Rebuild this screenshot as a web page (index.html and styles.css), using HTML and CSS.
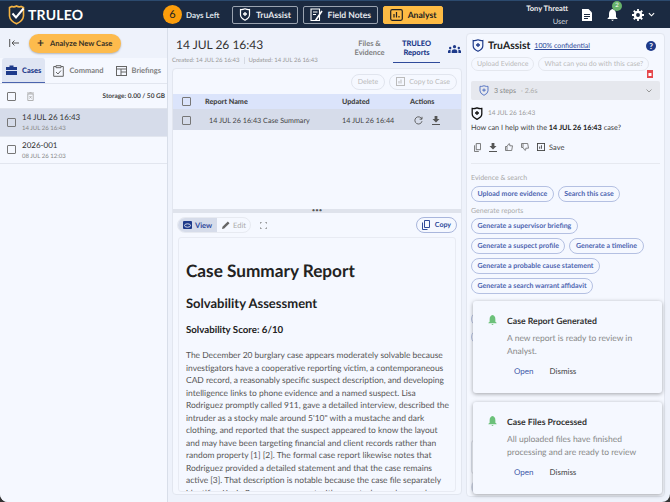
FILE: index.html
```html
<!DOCTYPE html>
<html lang="en">
<head>
  <meta charset="UTF-8" />
  <meta name="viewport" content="width=device-width, initial-scale=1.0" />
  <title>TRULEO Analyst</title>
  <link rel="stylesheet" href="styles.css">
</head>
<body>
  <div class="app">
    <!-- Top bar -->
    <header class="topbar">
      <div class="logo">
        <svg width="17" height="20" viewBox="0 0 17 20"><path d="M1.5 2.5 L4 1.5 Q6 2.5 8.5 1 Q11 2.5 13 1.5 L15.5 2.5 V11 Q15 16 8.5 18.8 Q2 16 1.5 11 Z" fill="none" stroke="#f5b342" stroke-width="1.6"/><path d="M4.5 8.5 L8 12.5 L15.5 3.5" fill="none" stroke="#fff" stroke-width="2"/></svg>
        <span>TRULEO</span>
      </div>
      <div class="days"><span class="days-num">6</span><span class="days-label">Days Left</span></div>
      <a class="nav-btn">
        <svg width="12" height="13" viewBox="0 0 12 13"><path d="M1.5 1.5 Q3 2 6 .8 Q9 2 10.5 1.5 V7 Q10.5 10 6 12.2 Q1.5 10 1.5 7 Z" fill="none" stroke="#fff" stroke-width="1.2"/><path d="M6 4 V8 M4 6 H8" stroke="#fff" stroke-width="1.3"/></svg>
        TruAssist
      </a>
      <a class="nav-btn">
        <svg width="13" height="14" viewBox="0 0 13 14"><path d="M1 1 H9.5 V12.5 H1 Z" fill="none" stroke="#fff" stroke-width="1.1"/><path d="M3 4 H7.5 M3 6.5 H6" stroke="#fff"/><path d="M12 3 L6.5 11 L5.5 12.5" stroke="#fff" stroke-width="1.6" fill="none"/></svg>
        Field Notes
      </a>
      <a class="nav-btn nav-active">
        <svg width="13" height="12" viewBox="0 0 13 12"><rect x=".7" y=".7" width="11.6" height="10.6" rx="1.5" fill="none" stroke="#222" stroke-width="1.2"/><path d="M4 8.5 V5 M6.5 8.5 V3 M9 8.5 V7" stroke="#222" stroke-width="1.2"/></svg>
        Analyst
      </a>
      <div class="user"><b>Tony Threatt</b><span>User</span></div>
      <svg class="top-icon" width="10" height="12" viewBox="0 0 10 12"><path d="M0 0 H6.5 L10 3.5 V12 H0 Z" fill="#fff"/><path d="M2 5.5 H8 M2 7.5 H8 M2 9.5 H6" stroke="#1b2a41"/></svg>
      <div class="bell">
        <svg width="11" height="12" viewBox="0 0 11 12"><path d="M5.5 0 Q9 1 9 5 V8 L10.5 9.5 V10 H.5 V9.5 L2 8 V5 Q2 1 5.5 0 Z M4 10.8 H7 L5.5 12 Z" fill="#fff"/></svg>
        <span class="badge">2</span>
      </div>
      <svg class="gear" width="12" height="12" viewBox="0 0 13 13"><circle cx="6.5" cy="6.5" r="3.4" fill="none" stroke="#fff" stroke-width="2.6"/><path d="M6.5 0 V3 M6.5 10 V13 M0 6.5 H3 M10 6.5 H13 M1.9 1.9 L4 4 M9 9 L11.1 11.1 M1.9 11.1 L4 9 M9 4 L11.1 1.9" stroke="#fff" stroke-width="2"/></svg>
      <svg width="7" height="5" viewBox="0 0 8 5"><path d="M1 1 L4 4 L7 1" fill="none" stroke="#fff" stroke-width="1.3"/></svg>
    </header>

    <div class="columns">
      <!-- Case list -->
      <aside class="sidebar">
        <div class="side-top">
          <svg width="10" height="8" viewBox="0 0 10 8"><path d="M.7 0 V8 M10 4 H3 M5.5 1.5 L3 4 L5.5 6.5" fill="none" stroke="#555" stroke-width="1"/></svg>
          <button class="analyze"><span class="plus">+</span>Analyze New Case</button>
        </div>
        <nav class="side-tabs">
          <a class="side-tab side-tab-on">
            <svg width="11" height="10" viewBox="0 0 11 10"><path d="M3.5 2 V.5 H7.5 V2 H11 V5 H0 V2 Z M0 6 H11 V10 H0 Z" fill="#1e3a8a"/></svg>
            Cases
          </a>
          <a class="side-tab">
            <svg width="11" height="12" viewBox="0 0 11 12"><path d="M3 1.5 H.7 V11.3 H10.3 V1.5 H8 M3 .7 H8 V2.7 H3 Z" fill="none" stroke="#666"/><path d="M3 7 L5 9 L8 5.5" fill="none" stroke="#666"/></svg>
            Command
          </a>
          <a class="side-tab">
            <svg width="11" height="10" viewBox="0 0 11 10"><rect x=".5" y=".5" width="10" height="9" fill="none" stroke="#666"/><path d="M.5 3 H10.5 M5 3 V9.5 M5 6 H10.5" stroke="#666"/></svg>
            Briefings
          </a>
        </nav>
        <div class="storage-row">
          <span class="check"></span>
          <svg width="7" height="9" viewBox="0 0 7 9"><path d="M.8 2 H6.2 V8.5 H.8 Z M0 1 H7 M2.5 .3 H4.5 M2.5 4 L4.5 6.5 M4.5 4 L2.5 6.5" fill="none" stroke="#aaa" stroke-width=".9"/></svg>
          <span class="storage">Storage: 0.00 / 50 GB</span>
        </div>
        <div class="case-row case-row-on">
          <span class="check"></span>
          <div><div class="case-name">14 JUL 26 16:43</div><div class="case-date">14 JUL 26 16:43</div></div>
        </div>
        <div class="case-row">
          <span class="check"></span>
          <div><div class="case-name">2026-001</div><div class="case-date">08 JUL 26 12:03</div></div>
        </div>
      </aside>

      <!-- Case detail -->
      <main class="main">
        <div class="main-head">
          <div class="main-title">
            <h1>14 JUL 26 16:43</h1>
            <div class="meta"><span>Created: 14 JUL 26 16:43</span><span class="meta-sep">Updated: 14 JUL 26 16:43</span></div>
          </div>
          <a class="main-tab">Files &amp;<br>Evidence</a>
          <a class="main-tab main-tab-on">TRULEO<br>Reports</a>
          <svg class="people" width="13" height="8" viewBox="0 0 13 8"><circle cx="6.5" cy="1.7" r="1.6" fill="#1e3a8a"/><circle cx="2.2" cy="3" r="1.2" fill="#1e3a8a"/><circle cx="10.8" cy="3" r="1.2" fill="#1e3a8a"/><path d="M3.7 8 V6 Q4 4.2 6.5 4.2 Q9 4.2 9.3 6 V8 Z M0 8 V6 Q.3 4.8 2.6 4.8 V8 Z M13 8 V6 Q12.7 4.8 10.4 4.8 V8 Z" fill="#1e3a8a"/></svg>
        </div>
        <section class="card">
          <div class="reports">
            <div class="report-tools">
              <button class="ghost">Delete</button>
              <button class="ghost">
                <svg width="9" height="9" viewBox="0 0 9 9"><rect x=".5" y=".5" width="8" height="8" fill="none" stroke="#bbb"/><path d="M3 6.5 V4 M5 6.5 V2.5" stroke="#bbb"/></svg>
                Copy to Case
              </button>
            </div>
            <div class="table-row table-head">
              <span class="cell-check"><span class="check"></span></span>
              <span class="cell-name">Report Name</span>
              <span class="cell-date">Updated</span>
              <span class="cell-actions">Actions</span>
            </div>
            <div class="table-row table-sel">
              <span class="cell-check"><span class="check"></span></span>
              <span class="cell-name cell-indent">14 JUL 26 16:43 Case Summary</span>
              <span class="cell-date">14 JUL 26 16:44</span>
              <span class="cell-actions icons">
                <svg width="9" height="9" viewBox="0 0 9 9"><path d="M7.8 3 A3.6 3.6 0 1 0 8 5.2 M8 .8 V3.2 H5.6" fill="none" stroke="#555" stroke-width=".9"/></svg>
                <svg width="8" height="9" viewBox="0 0 8 9"><path d="M2.6 0 H5.4 V3 H7.5 L4 6.5 L.5 3 H2.6 Z M0 8 H8 V9 H0 Z" fill="#555"/></svg>
              </span>
            </div>
          </div>
          <div class="splitter">&bull;&bull;&bull;</div>
          <div class="view-tools">
            <div class="toggle">
              <span class="toggle-on">
                <svg width="9" height="8" viewBox="0 0 9 8"><rect width="9" height="8" rx="1" fill="#1e3a8a"/><ellipse cx="4.5" cy="4.5" rx="3" ry="1.7" fill="none" stroke="#fff" stroke-width=".8"/></svg>
                View
              </span>
              <span class="toggle-off">
                <svg width="8" height="8" viewBox="0 0 8 8"><path d="M0 8 L.5 5.8 L5.8 .5 L7.5 2.2 L2.2 7.5 Z" fill="#666"/></svg>
                Edit
              </span>
            </div>
            <svg width="7" height="7" viewBox="0 0 7 7"><path d="M0 2 V0 H2 M5 0 H7 V2 M7 5 V7 H5 M2 7 H0 V5" fill="none" stroke="#777" stroke-width=".9"/></svg>
            <button class="copy">
              <svg width="8" height="10" viewBox="0 0 8 10"><path d="M2.5 .5 H7.5 V7.5 H2.5 Z M.5 2.5 V9.5 H5.5" fill="none" stroke="#2f4a9a"/></svg>
              Copy
            </button>
          </div>
          <article class="report">
            <h2>Case Summary Report</h2>
            <h3>Solvability Assessment</h3>
            <h4>Solvability Score: 6/10</h4>
            <p>The December 20 burglary case appears moderately solvable because investigators have a cooperative reporting victim, a contemporaneous CAD record, a reasonably specific suspect description, and developing intelligence links to phone evidence and a named suspect. Lisa Rodriguez promptly called 911, gave a detailed interview, described the intruder as a stocky male around 5'10" with a mustache and dark clothing, and reported that the suspect appeared to know the layout and may have been targeting financial and client records rather than random property [1] [2]. The formal case report likewise notes that Rodriguez provided a detailed statement and that the case remains active [3]. That description is notable because the case file separately identifies Kevin Rowan as a suspect with a mustache, and a search</p>
          </article>
        </section>
      </main>

      <!-- TruAssist panel -->
      <section class="assist">
        <div class="assist-head">
          <svg width="12" height="13" viewBox="0 0 12 13"><path d="M1.2 1.5 Q3 2 6 .8 Q9 2 10.8 1.5 V7 Q10.8 10 6 12.3 Q1.2 10 1.2 7 Z" fill="none" stroke="#1e3a8a" stroke-width="1.2"/><path d="M6 4 V8 M4 6 H8" stroke="#1e3a8a" stroke-width="1.3"/></svg>
          <b>TruAssist</b>
          <a>100% confidential</a>
          <span class="help">?</span>
        </div>
        <div class="assist-body">
          <div class="prompts">
            <span>Upload Evidence</span>
            <span>What can you do with this case?</span>
          </div>
          <div class="trash">
            <svg width="6" height="8" viewBox="0 0 6 8"><path d="M0 0 H6 V8 H0 Z" fill="#e5484d"/><path d="M1.5 3 H4.5 V6 H1.5 Z" fill="#fff"/></svg>
          </div>
          <div class="steps">
            <svg width="10" height="11" viewBox="0 0 12 13"><path d="M1.2 1.5 Q3 2 6 .8 Q9 2 10.8 1.5 V7 Q10.8 10 6 12.3 Q1.2 10 1.2 7 Z" fill="none" stroke="#5b78c4" stroke-width="1.2"/><path d="M6 4 V8 M4 6 H8" stroke="#5b78c4" stroke-width="1.3"/></svg>
            <span>3 steps</span><em>&middot; 2.6s</em>
            <svg class="steps-arrow" width="6" height="4" viewBox="0 0 6 4"><path d="M.5 .5 L3 3 L5.5 .5" fill="none" stroke="#999"/></svg>
          </div>
          <div class="msg-head">
            <svg width="12" height="13" viewBox="0 0 12 13"><path d="M1.2 1.5 Q3 2 6 .8 Q9 2 10.8 1.5 V7 Q10.8 10 6 12.3 Q1.2 10 1.2 7 Z" fill="none" stroke="#111" stroke-width="1.3"/><path d="M6 4 V8 M4 6 H8" stroke="#111" stroke-width="1.3"/></svg>
            <span>14 JUL 26 16:43</span>
          </div>
          <p class="msg">How can I help with the <b>14 JUL 26 16:43</b> case?</p>
          <div class="msg-actions">
            <svg width="7" height="9" viewBox="0 0 8 10"><path d="M2.5 .5 H7.5 V7.5 H2.5 Z M.5 2.5 V9.5 H5.5" fill="none" stroke="#666"/></svg>
            <svg width="8" height="9" viewBox="0 0 8 9"><path d="M2.6 0 H5.4 V3 H7.5 L4 6.5 L.5 3 H2.6 Z M0 8 H8 V9 H0 Z" fill="#555"/></svg>
            <svg width="8" height="8" viewBox="0 0 8 8"><path d="M.5 3.5 H2 V7.5 H.5 Z M2 3.5 L4 .5 Q5 .5 4.8 2.8 H7.5 L6.7 7.5 H2" fill="none" stroke="#666" stroke-width=".8"/></svg>
            <svg width="8" height="8" viewBox="0 0 8 8"><path d="M.5 .5 H2 V4.5 H.5 Z M2 4.5 L4 7.5 Q5 7.5 4.8 5.2 H7.5 L6.7 .5 H2" fill="none" stroke="#666" stroke-width=".8"/></svg>
            <span class="save">
              <svg width="8" height="8" viewBox="0 0 9 9"><rect x=".5" y=".5" width="8" height="8" fill="none" stroke="#444"/><path d="M3 6.5 V4 M5 6.5 V2.5" stroke="#444"/></svg>
              Save
            </span>
          </div>
          <div class="group-label">Evidence &amp; search</div>
          <div class="chips">
            <span>Upload more evidence</span>
            <span>Search this case</span>
          </div>
          <div class="group-label">Generate reports</div>
          <div class="chips">
            <span>Generate a supervisor briefing</span>
            <span>Generate a suspect profile</span>
            <span>Generate a timeline</span>
            <span>Generate a probable cause statement</span>
            <span>Generate a search warrant affidavit</span>
          </div>
          <!-- covered by the toasts, only the left edges show -->
          <div class="under-toasts">
            <i class="stub-pill"></i>
            <i class="stub-pill"></i>
            <i class="stub-input"></i>
            <i class="stub-send"></i>
          </div>
        </div>
      </section>
    </div>

    <!-- Notifications -->
    <div class="toasts">
      <div class="toast">
        <svg width="9" height="10" viewBox="0 0 11 12"><path d="M5.5 0 Q9 1 9 5 V8 L10.5 9.5 V10 H.5 V9.5 L2 8 V5 Q2 1 5.5 0 Z M4 10.8 H7 L5.5 12 Z" fill="#6cc17a"/></svg>
        <div>
          <h5>Case Report Generated</h5>
          <p>A new report is ready to review in Analyst.</p>
          <div class="toast-links"><a class="open">Open</a><a>Dismiss</a></div>
        </div>
      </div>
      <div class="toast">
        <svg width="9" height="10" viewBox="0 0 11 12"><path d="M5.5 0 Q9 1 9 5 V8 L10.5 9.5 V10 H.5 V9.5 L2 8 V5 Q2 1 5.5 0 Z M4 10.8 H7 L5.5 12 Z" fill="#6cc17a"/></svg>
        <div>
          <h5>Case Files Processed</h5>
          <p>All uploaded files have finished processing and are ready to review</p>
          <div class="toast-links"><a class="open">Open</a><a>Dismiss</a></div>
        </div>
      </div>
    </div>
  </div>
</body>
</html>
```

FILE: styles.css
```css
*, *::before, *::after {
  box-sizing: border-box;
}
body {
  margin: 0;
  font-family: Lato, "Open Sans", sans-serif;
  text-rendering: geometricPrecision;
  background-color: #333;
  color: #333;
}
p, h1, h2, h3, h4, h5 {
  margin: 0;
}
button {
  font-family: inherit;
  text-rendering: inherit;
}
svg {
  flex: none;
}
.app {
  position: relative;
  width: 670px;
  height: 502px;
  overflow: hidden;
  display: flex;
  flex-direction: column;
  background-color: #eef2fb;
  border-radius: 0 0 8px 8px;
}

/* top bar */
.topbar {
  height: 28px;
  flex: none;
  background-color: #1b2a41;
  border-top: 1px solid #2c4a6e;
  display: flex;
  align-items: center;
  color: #fff;
  padding: 0 15px 0 8px;
}
.logo {
  display: flex;
  align-items: center;
  gap: 3px;
  width: 155px;
  font-size: 14px;
  font-weight: 700;
  letter-spacing: 0.2px;
}
.days {
  display: flex;
  align-items: center;
  gap: 4px;
  width: 69px;
}
.days-num {
  width: 19px;
  height: 19px;
  border-radius: 50%;
  background-color: #fb9d0b;
  color: #222;
  font-size: 11px;
  text-align: center;
  line-height: 19px;
}
.days-label {
  font-size: 8px;
  font-weight: 700;
  color: #dfe3ea;
}
.nav-btn {
  display: flex;
  align-items: center;
  justify-content: center;
  gap: 5px;
  height: 18px;
  margin-right: 4.5px;
  padding: 0 6px;
  border: 1px solid #9aa3b0;
  border-radius: 2px;
  font-size: 8.6px;
  font-weight: 700;
  color: #e6e8ec;
}
.nav-active {
  background-color: #fdbb44;
  border-color: #fdbb44;
  color: #222;
  margin: 0;
}
.user {
  margin-left: auto;
  margin-right: 14px;
  display: flex;
  flex-direction: column;
  align-items: flex-end;
  gap: 4px;
  font-size: 7.5px;
  color: #cfd4dc;
}
.user b {
  font-weight: 700;
  color: #eee;
}
.top-icon {
  margin-right: 15px;
}
.bell {
  position: relative;
  display: flex;
  margin-right: 14px;
}
.badge {
  position: absolute;
  left: 5px;
  top: -8px;
  width: 10px;
  height: 10px;
  border-radius: 50%;
  background-color: #68b36b;
  font-size: 6px;
  text-align: center;
  line-height: 10px;
}
.gear {
  margin-right: 4px;
}

.columns {
  flex: 1;
  display: flex;
  min-height: 0;
}

/* sidebar */
.sidebar {
  width: 168px;
  flex: none;
  background-color: #f5f8ff;
  border-right: 1px solid #d8dee9;
}
.side-top {
  height: 30px;
  background-color: #eef2fb;
  display: flex;
  align-items: center;
  gap: 10px;
  padding-left: 9px;
}
.analyze {
  display: flex;
  align-items: center;
  height: 19px;
  padding: 0 9px 0 8px;
  border: none;
  border-radius: 10px;
  background-color: #fdbb4d;
  box-shadow: 0 1px 2px rgba(0, 0, 0, 0.25);
  font-size: 7.6px;
  font-weight: 700;
  color: #3a3226;
}
.plus {
  font-size: 12px;
  margin-right: 6px;
  line-height: 10px;
}
.side-tabs {
  height: 26px;
  display: flex;
  align-items: stretch;
  padding-left: 2px;
  border-bottom: 1px solid #e2e6ef;
}
.side-tab {
  display: flex;
  align-items: center;
  gap: 5px;
  padding: 0 4px;
  margin-right: 4px;
  font-size: 7.5px;
  font-weight: 700;
  color: #808080;
}
.side-tab-on {
  background-color: #dfe5f3;
  border-bottom: 1px solid #4a64ae;
  border-radius: 3px 3px 0 0;
  color: #1e3a8a;
  font-weight: 900;
}
.storage-row {
  height: 25px;
  display: flex;
  align-items: center;
  padding: 0 2px 0 7px;
  border-bottom: 1px solid #dfe3ec;
}
.storage-row svg {
  margin-left: 11px;
}
.storage {
  margin-left: auto;
  font-size: 6.5px;
  font-weight: 700;
  color: #444;
}
.check {
  display: block;
  width: 9px;
  height: 9px;
  flex: none;
  border: 1px solid #777;
  border-radius: 1px;
}
.case-row {
  height: 27.5px;
  display: flex;
  align-items: center;
  gap: 6px;
  padding-left: 7px;
  border-bottom: 1px solid #e2e6ef;
}
.case-row-on {
  background-color: #d6dcea;
}
.case-name {
  font-size: 8px;
  color: #333;
  margin-bottom: 3px;
}
.case-date {
  font-size: 6px;
  color: #888;
}

/* main column */
.main {
  width: 298px;
  flex: none;
  display: flex;
  flex-direction: column;
  padding: 0 4px 7px;
}
.main-head {
  height: 40px;
  flex: none;
  display: flex;
}
.main-title {
  flex: 1;
  padding-top: 9px;
}
.main-title h1 {
  font-size: 12px;
  font-weight: 400;
  color: #333;
  margin-left: 4px;
  margin-bottom: 5px;
}
.meta {
  display: flex;
  font-size: 6px;
  color: #999;
}
.meta-sep {
  margin-left: 4px;
  padding-left: 4px;
  border-left: 1px solid #d5d9e2;
}
.main-tab {
  width: 47px;
  height: 35px;
  text-align: center;
  font-size: 7.5px;
  line-height: 9px;
  padding-top: 11px;
  color: #808080;
  font-weight: 700;
}
.main-tab-on {
  color: #1e3a8a;
  font-weight: 900;
  border-bottom: 1px solid #2f4a9a;
}
.people {
  margin: 17px 1px 0 8px;
}
.card {
  flex: 1;
  min-height: 0;
  display: flex;
  flex-direction: column;
  background-color: #f5f8ff;
  border: 1px solid #e2e6ef;
  border-radius: 4px;
}
.reports {
  height: 140px;
  flex: none;
}
.report-tools {
  height: 25px;
  display: flex;
  justify-content: flex-end;
  align-items: center;
  gap: 4px;
  padding-right: 4px;
}
.ghost {
  display: flex;
  align-items: center;
  gap: 4px;
  height: 16px;
  padding: 0 6px;
  border: 1px solid #e1e5ee;
  border-radius: 8px;
  background: none;
  font-size: 7px;
  color: #bbb;
}
.table-row {
  display: flex;
  align-items: center;
  font-size: 7.2px;
}
.table-head {
  height: 15px;
  background-color: #dbe4fb;
  font-weight: 900;
  color: #444;
}
.table-sel {
  height: 21px;
  padding-top: 1px;
  background-color: #d6dcea;
  color: #444;
}
.cell-check {
  width: 32px;
  padding-left: 9px;
}
.cell-name {
  width: 137px;
}
.cell-indent {
  padding-left: 4px;
}
.cell-date {
  width: 68px;
}
.cell-actions {
  flex: 1;
}
.icons {
  display: flex;
  gap: 9px;
  padding-left: 4px;
  align-items: center;
}
.splitter {
  height: 4px;
  flex: none;
  background-color: #dfe3ec;
  text-align: center;
  font-size: 6px;
  line-height: 4px;
  color: #555;
}
.view-tools {
  height: 24px;
  flex: none;
  display: flex;
  align-items: center;
  padding: 0 4px;
}
.toggle {
  display: flex;
  height: 16px;
  border: 1px solid #e7eaf1;
  border-radius: 8px;
  overflow: hidden;
  font-size: 7.5px;
  margin-right: 9px;
}
.toggle span {
  display: flex;
  align-items: center;
  gap: 3px;
}
.toggle-on {
  background-color: #d6dcea;
  color: #2f4a9a;
  padding: 0 5px;
  font-weight: 700;
}
.toggle-off {
  color: #aaa;
  padding: 0 4px 0 5px;
}
.copy {
  margin-left: auto;
  display: flex;
  align-items: center;
  gap: 5px;
  height: 16px;
  padding: 0 5px;
  border: 1px solid #a9b6dc;
  border-radius: 8px;
  background: none;
  font-size: 7px;
  font-weight: 700;
  color: #2f4a9a;
}
.report {
  flex: 1;
  min-height: 0;
  overflow: hidden;
  margin: 0 5px 2px;
  padding: 22px 3px 0 7px;
  border: 1px solid #e8ebf3;
  border-radius: 3px;
}
.report h2 {
  font-size: 17.2px;
  font-weight: 700;
  color: #222;
  margin-bottom: 14px;
}
.report h3 {
  font-size: 13px;
  font-weight: 700;
  color: #222;
  margin-bottom: 13px;
}
.report h4 {
  font-size: 9.7px;
  font-weight: 700;
  color: #222;
  margin-bottom: 13px;
}
.report p {
  font-size: 8.45px;
  line-height: 12.5px;
  color: #555;
}

/* assistant panel */
.assist {
  width: 199px;
  flex: none;
  margin: 5px 0 5px 0;
  background-color: #f5f8ff;
  border: 1px solid #e2e6ef;
  border-radius: 4px;
  overflow: hidden;
}
.assist-head {
  height: 23px;
  display: flex;
  align-items: center;
  padding: 0 5px;
  gap: 4px;
}
.assist-head b {
  font-size: 10.4px;
  font-weight: 700;
  color: #222;
}
.assist-head a {
  font-size: 7px;
  color: #2f4a9a;
  text-decoration: underline;
}
.help {
  margin-left: auto;
  margin-right: 3px;
  width: 10px;
  height: 10px;
  border-radius: 50%;
  background-color: #1e3a8a;
  color: #fff;
  font-size: 8px;
  font-weight: 700;
  text-align: center;
  line-height: 10px;
}
.assist-body {
  position: relative;
  padding: 0 4px;
}
.prompts {
  display: flex;
  gap: 4px;
  height: 14px;
}
.prompts span {
  height: 14px;
  padding: 0 5px;
  border: 1px solid #e4e7ee;
  border-radius: 7px;
  font-size: 7px;
  color: #bbb;
  line-height: 12px;
}
.trash {
  position: absolute;
  top: 13px;
  right: 11px;
  display: flex;
}
.steps {
  margin-top: 10px;
  height: 19px;
  display: flex;
  align-items: center;
  gap: 5px;
  padding: 0 8px;
  background-color: #e6e8ee;
  border-radius: 2px;
  font-size: 7px;
  color: #888;
}
.steps em {
  font-style: normal;
  color: #aaa;
}
.steps-arrow {
  margin-left: auto;
}
.msg-head {
  margin-top: 7px;
  display: flex;
  align-items: center;
  gap: 5px;
  font-size: 6.5px;
  color: #999;
}
.msg {
  margin-top: 3px;
  font-size: 7.3px;
  color: #444;
}
.msg b {
  color: #222;
}
.msg-actions {
  margin-top: 7px;
  margin-bottom: 10px;
  padding-left: 3px;
  display: flex;
  align-items: center;
  gap: 8px;
  border-bottom: 1px solid #e6e9f0;
  padding-bottom: 8px;
  height: 25px;
}
.save {
  display: flex;
  align-items: center;
  gap: 4px;
  font-size: 7.5px;
  color: #444;
}
.group-label {
  margin-top: 5px;
  margin-bottom: 3.5px;
  font-size: 7px;
  color: #aaa;
}
.chips {
  display: flex;
  flex-wrap: wrap;
  gap: 4px;
}
.chips span {
  height: 16px;
  padding: 0 5.5px;
  border: 1px solid #b4c0e2;
  border-radius: 8px;
  font-size: 7px;
  font-weight: 700;
  color: #4d64b0;
  line-height: 14px;
}
.under-toasts {
  display: flex;
  flex-direction: column;
  align-items: flex-start;
  gap: 4px;
  padding-top: 18px;
}
.stub-pill {
  width: 90px;
  height: 14px;
  border: 1px solid #b4c0e2;
  border-radius: 8px;
}
.stub-input {
  width: 100%;
  height: 34px;
  margin-top: 92px;
  border: 1px solid #d8dde8;
  border-radius: 3px;
}
.stub-send {
  width: 14px;
  height: 14px;
  border-radius: 50%;
  margin-top: 2px;
  background-color: #cfd5e6;
}

/* toasts */
.toasts {
  position: absolute;
  left: 473px;
  top: 301px;
  width: 189px;
  display: flex;
  flex-direction: column;
  gap: 9px;
}
.toast {
  height: 92px;
  display: flex;
  gap: 10px;
  padding: 14px 15px;
  background-color: #f5f8ff;
  border-radius: 3px;
  box-shadow: 0 1px 4px rgba(0, 0, 0, 0.35);
}
.toast h5 {
  font-size: 8.7px;
  font-weight: 700;
  color: #333;
  margin-bottom: 6px;
}
.toast p {
  font-size: 8.5px;
  line-height: 12.5px;
  color: #888;
  min-height: 25px;
}
.toast-links {
  margin-top: 9px;
  display: flex;
  gap: 16px;
  padding-left: 7px;
  font-size: 8px;
  color: #444;
}
.open {
  color: #3f58a8;
}
```
